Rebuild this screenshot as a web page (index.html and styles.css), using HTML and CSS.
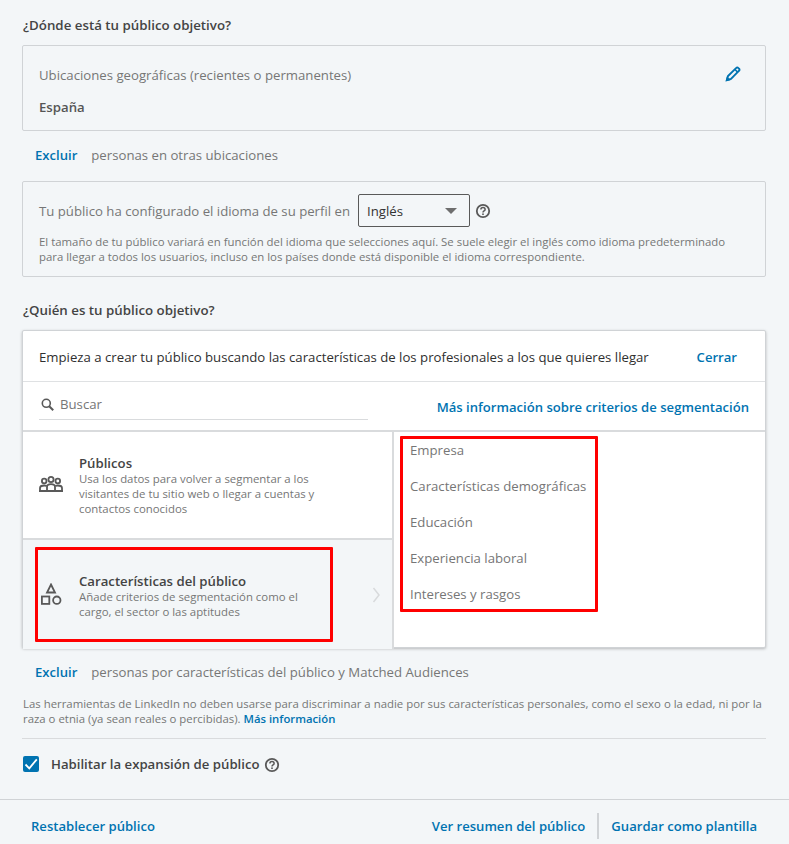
FILE: index.html
```html
<!DOCTYPE html>
<html lang="es">
<head>
  <meta charset="UTF-8">
  <meta name="viewport" content="width=device-width, initial-scale=1.0">
  <title>Público objetivo</title>
  <link rel="stylesheet" href="styles.css">
</head>
<body>
  <main class="audience">
    <h2 class="section-title first">¿Dónde está tu público objetivo?</h2>

    <div class="box location-box">
      <div class="location-head">
        <span class="muted">Ubicaciones geográficas (recientes o permanentes)</span>
        <svg class="pencil" width="16" height="16" viewBox="0 0 16 16">
          <path d="M2 14 3 10 11.300 1.900a1.300 1.300 0 0 1 1.900 0l.9.9a1.300 1.300 0 0 1 0 1.900L6 13z" fill="none" stroke="#0073b1" stroke-width="1.900"/>
          <path d="M0.500 15.500 1.800 10.500 5.500 14.200z" fill="#0073b1"/>
          <path d="m10 3.500 2.600 2.600" stroke="#0073b1" stroke-width="1.500"/>
        </svg>
      </div>
      <div class="location-value">España</div>
    </div>

    <div class="exclude-row upper">
      <a class="link" href="#">Excluir</a>
      <span class="muted">personas en otras ubicaciones</span>
    </div>

    <div class="box language-box">
      <div class="language-head">
        <span class="muted">Tu público ha configurado el idioma de su perfil en</span>
        <div class="select"><span>Inglés</span><i class="caret"></i></div>
        <svg class="help" width="16" height="16" viewBox="0 0 16 16">
          <circle cx="8" cy="8" r="6.200" fill="none" stroke="#595959" stroke-width="1.800"/>
          <path d="M5.900 6.500C5.900 5.300 6.800 4.600 8 4.600s2.100.7 2.100 1.800c0 1.600-2.100 1.500-2.100 3" fill="none" stroke="#595959" stroke-width="1.500"/>
          <circle cx="8" cy="11.200" r=".9" fill="#595959"/>
        </svg>
      </div>
      <p class="small">El tamaño de tu público variará en función del idioma que selecciones aquí. Se suele elegir el inglés como idioma predeterminado<br>para llegar a todos los usuarios, incluso en los países donde está disponible el idioma correspondiente.</p>
    </div>

    <h2 class="section-title second">¿Quién es tu público objetivo?</h2>

    <section class="panel">
      <div class="panel-head">
        <span>Empieza a crear tu público buscando las características de los profesionales a los que quieres llegar</span>
        <a class="link close" href="#">Cerrar</a>
      </div>
      <div class="search-row">
        <div class="search">
          <svg width="13" height="13" viewBox="0 0 13 13">
            <circle cx="5.300" cy="5.300" r="4" fill="none" stroke="#595959" stroke-width="1.600"/>
            <path d="m8.200 8.200 4 4" stroke="#595959" stroke-width="2"/>
          </svg>
          <span class="muted">Buscar</span>
        </div>
        <a class="link" href="#">Más información sobre criterios de segmentación</a>
      </div>
      <div class="columns">
        <div class="sources">
          <div class="source">
            <svg class="source-icon" width="24" height="24" viewBox="0 0 24 24">
              <g fill="none" stroke="#595959" stroke-width="1.800">
                <circle cx="12" cy="6.500" r="2.600"/>
                <circle cx="5.200" cy="8" r="2.300"/>
                <circle cx="18.800" cy="8" r="2.300"/>
                <path d="M8 18v-4c0-1.600 1.400-2.800 4-2.800s4 1.200 4 2.800v4"/>
                <path d="M1 18v-3c0-1.500 1.400-2.500 4.200-2.500 1 0 1.800.1 2.500.4M23 18v-3c0-1.500-1.400-2.500-4.200-2.500-1 0-1.800.1-2.500.4"/>
              </g>
              <rect x="0" y="17" width="24" height="2" fill="#595959"/>
            </svg>
            <div class="source-text">
              <h3>Públicos</h3>
              <p class="small">Usa los datos para volver a segmentar a los visitantes de tu sitio web o llegar a cuentas y contactos conocidos</p>
            </div>
          </div>
          <div class="source active">
            <svg class="source-icon" width="24" height="24" viewBox="0 0 24 24">
              <g fill="none" stroke="#595959" stroke-width="1.800">
                <path d="M12 1.500 16 9.500H8z"/>
                <rect x="2.900" y="13.500" width="7.400" height="7.400"/>
                <circle cx="17.800" cy="17.200" r="3.700"/>
              </g>
            </svg>
            <div class="source-text">
              <h3>Características del público</h3>
              <p class="small">Añade criterios de segmentación como el cargo, el sector o las aptitudes</p>
            </div>
            <svg class="chevron" width="9" height="16" viewBox="0 0 9 16">
              <path d="m1.500 1 5.500 7-5.500 7" fill="none" stroke="#d8dadc" stroke-width="1.500"/>
            </svg>
          </div>
        </div>
        <ul class="categories">
          <li>Empresa</li>
          <li>Características demográficas</li>
          <li>Educación</li>
          <li>Experiencia laboral</li>
          <li>Intereses y rasgos</li>
        </ul>
      </div>
      <div class="mark mark-left"></div>
      <div class="mark mark-right"></div>
    </section>

    <div class="exclude-row lower">
      <a class="link" href="#">Excluir</a>
      <span class="muted">personas por características del público y Matched Audiences</span>
    </div>

    <p class="small notice">Las herramientas de LinkedIn no deben usarse para discriminar a nadie por sus características personales, como el sexo o la edad, ni por la<br>raza o etnia (ya sean reales o percibidas). <a class="link" href="#">Más información</a></p>

    <label class="expansion">
      <span class="checkbox">
        <svg width="16" height="16" viewBox="0 0 16 16">
          <path d="m2.500 8.500 3.800 3.800 7.500-9" fill="none" stroke="#fff" stroke-width="1.800"/>
        </svg>
      </span>
      <span class="expansion-label">Habilitar la expansión de público</span>
      <svg class="help" width="16" height="16" viewBox="0 0 16 16">
        <circle cx="8" cy="8" r="6.200" fill="none" stroke="#595959" stroke-width="1.800"/>
        <path d="M5.900 6.500C5.900 5.300 6.800 4.600 8 4.600s2.100.7 2.100 1.800c0 1.600-2.100 1.500-2.100 3" fill="none" stroke="#595959" stroke-width="1.500"/>
        <circle cx="8" cy="11.200" r=".9" fill="#595959"/>
      </svg>
    </label>
  </main>

  <footer class="actions">
    <a class="link" href="#">Restablecer público</a>
    <div class="actions-right">
      <a class="link" href="#">Ver resumen del público</a>
      <a class="link save" href="#">Guardar como plantilla</a>
    </div>
  </footer>
</body>
</html>
```

FILE: styles.css
```css
html, body {
  height: 100%;
}
body {
  margin: 0;
  font-family: "Open Sans", "Noto Sans", Arial, sans-serif;
  font-size: 13.2px;
  background: #f3f6f8;
  color: #3a3a3a;
  overflow: hidden;
}
a {
  text-decoration: none;
}
.audience {
  padding: 0 23px 0 22px;
}
.section-title {
  margin: 0;
  padding-left: 1px;
  font-size: 13.3px;
  line-height: 18px;
  font-weight: 600;
  color: #444;
}
.section-title.first {
  padding-top: 16px;
  padding-bottom: 11px;
}
.section-title.second {
  padding-top: 24px;
  padding-bottom: 11px;
}
.box {
  border: 1px solid #d0d3d6;
  border-radius: 2px;
  padding: 0 16px;
}
.muted {
  color: #767676;
}
.link {
  color: #0073b1;
  font-size: 13.1px;
  font-weight: 600;
}
.small {
  margin: 0;
  font-size: 11.4px;
  line-height: 15px;
  color: #767676;
}
.location-box {
  height: 86px;
  box-sizing: border-box;
  padding-top: 20px;
}
.location-head {
  display: flex;
  justify-content: space-between;
  padding-right: 8px;
  line-height: 18px;
}
.location-value {
  margin-top: 14px;
  font-weight: 600;
  color: #555;
  line-height: 18px;
}
.exclude-row {
  display: flex;
  gap: 14px;
  align-items: center;
  padding-left: 13px;
  line-height: 18px;
}
.exclude-row.upper {
  height: 48px;
  padding-bottom: 2px;
}
.language-box {
  height: 96px;
  box-sizing: border-box;
  padding-top: 12px;
}
.language-head {
  display: flex;
  align-items: center;
  gap: 5px;
}
.select {
  box-sizing: border-box;
  width: 112px;
  height: 33px;
  margin-left: 3px;
  border: 1px solid #595959;
  border-radius: 2px;
  display: flex;
  align-items: center;
  justify-content: space-between;
  padding: 0 12px 0 8px;
  color: #333;
}
.caret {
  width: 0;
  height: 0;
  border-left: 6px solid transparent;
  border-right: 6px solid transparent;
  border-top: 6px solid #6e6e6e;
}
.language-box .small {
  margin-top: 7px;
}
.help {
  flex: none;
}
.panel {
  position: relative;
  background: #fff;
  height: 318px;
  box-sizing: border-box;
  border: 1px solid #d0d3d6;
  border-radius: 2px;
  box-shadow: 0 1px 3px rgba(0, 0, 0, 0.25);
}
.panel-head {
  display: flex;
  justify-content: space-between;
  align-items: center;
  height: 49px;
  padding: 1px 28px 0 16px;
  border-bottom: 1px solid #dfe1e3;
  color: #2f2f2f;
}
.search-row {
  display: flex;
  justify-content: space-between;
  height: 48px;
  padding: 0 16px;
  border-bottom: 2px solid #d9dbdd;
}
.search-row .link {
  margin-top: 16px;
}
.search {
  width: 329px;
  height: 38px;
  box-sizing: border-box;
  border-bottom: 1px solid #d9dbdd;
  display: flex;
  align-items: center;
  gap: 6px;
  padding: 7px 0 0 2px;
}
.columns {
  display: flex;
  height: 217px;
}
.sources {
  width: 369px;
  border-right: 2px solid #d9dbdd;
}
.source {
  display: flex;
  align-items: center;
  box-sizing: border-box;
  padding-left: 16px;
}
.source:first-child {
  height: 108px;
  border-bottom: 2px solid #d9dbdd;
}
.source.active {
  height: 109px;
  padding-top: 1px;
  background: #f3f6f8;
}
.source-icon {
  flex: none;
  margin-right: 16px;
}
.source-text {
  width: 240px;
  padding-top: 1px;
}
.source h3 {
  margin: 0;
  font-size: 13.2px;
  line-height: 16px;
  font-weight: 600;
  color: #444;
}
.chevron {
  margin-left: auto;
  margin-right: 11px;
}
.categories {
  list-style: none;
  margin: 0;
  padding: 9px 0 0 16px;
}
.categories li {
  height: 36px;
  line-height: 18px;
  color: #767676;
}
.mark {
  position: absolute;
  box-sizing: border-box;
  border: 3px solid #ff0000;
  border-radius: 1px;
}
.mark-left {
  left: 12px;
  top: 216px;
  width: 298px;
  height: 95px;
}
.mark-right {
  left: 377px;
  top: 105px;
  width: 198px;
  height: 176px;
}
.exclude-row.lower {
  height: 48px;
}
.notice {
  padding-left: 1px;
  padding-bottom: 12px;
  border-bottom: 1px solid #d9dbdd;
}
.notice .link {
  font-size: 11.3px;
}
.expansion {
  display: flex;
  align-items: center;
  height: 50px;
  font-weight: 600;
  color: #444;
}
.checkbox {
  width: 16px;
  height: 16px;
  background: #0073b1;
  border-radius: 2px;
  margin: 0 12px 0 1px;
  display: flex;
}
.expansion .help {
  margin-left: 4px;
  margin-top: 2px;
}
.actions {
  position: absolute;
  left: 0;
  right: 0;
  top: 799px;
  height: 45px;
  box-sizing: border-box;
  border-top: 1px solid #d0d3d6;
  display: flex;
  justify-content: space-between;
  align-items: center;
  padding: 8px 32px 0 31px;
}
.actions-right {
  display: flex;
  align-items: center;
}
.save {
  margin-left: 12px;
  padding-left: 12px;
  border-left: 2px solid #d0d3d6;
  line-height: 26px;
}
```
